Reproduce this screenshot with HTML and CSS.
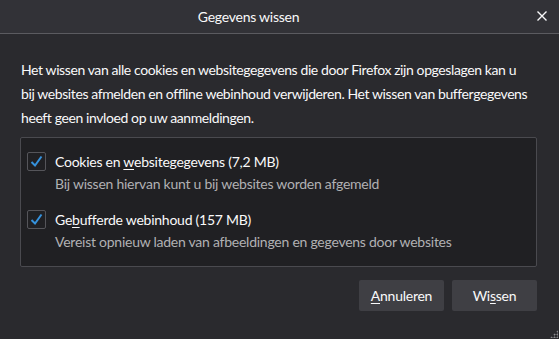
FILE: index.html
```html
<!DOCTYPE html>
<html lang="nl">
<head>
<meta charset="UTF-8" />
<meta name="viewport" content="width=device-width, initial-scale=1" />
<title>Gegevens wissen</title>
<link rel="stylesheet" href="styles.css">
</head>
<body>

<div class="dialog">
  <header class="titlebar">
    <span class="title">Gegevens wissen</span>
    <button class="close" title="Sluiten">
      <svg width="10" height="10" viewBox="0 0 10 10"><path d="M0.5 0.5 L9.5 9.5 M9.5 0.5 L0.5 9.5" stroke="#f9f9fa" stroke-width="1.4" fill="none"/></svg>
    </button>
  </header>

  <main class="content">
    <p class="intro">Het wissen van alle cookies en websitegegevens die door Firefox zijn opgeslagen kan u<br>
      bij websites afmelden en offline webinhoud verwijderen. Het wissen van buffergegevens<br>
      heeft geen invloed op uw aanmeldingen.</p>

    <div class="options">
      <label class="option">
        <span class="check">
          <svg width="17" height="17" viewBox="0 0 17 17"><path d="M3.5 9 L7 12.5 L13.5 3.5" stroke="#3592dd" stroke-width="2" fill="none"/></svg>
        </span>
        <span class="text">
          <span class="name">Cookies en <u>w</u>ebsitegegevens (7,2 MB)</span>
          <span class="desc">Bij wissen hiervan kunt u bij websites worden afgemeld</span>
        </span>
      </label>
      <label class="option">
        <span class="check">
          <svg width="17" height="17" viewBox="0 0 17 17"><path d="M3.5 9 L7 12.5 L13.5 3.5" stroke="#3592dd" stroke-width="2" fill="none"/></svg>
        </span>
        <span class="text">
          <span class="name">Ge<u>b</u>ufferde webinhoud (157 MB)</span>
          <span class="desc">Vereist opnieuw laden van afbeeldingen en gegevens door websites</span>
        </span>
      </label>
    </div>

    <div class="actions">
      <button class="btn"><u>A</u>nnuleren</button>
      <button class="btn">Wi<u>s</u>sen</button>
    </div>
  </main>

  <div class="grip"></div>
</div>

</body>
</html>
```

FILE: styles.css
```css
html, body {
  margin: 0; padding: 0;
  background: #2a2a2e;
}
body {
  font-family: Lato, "Noto Sans", sans-serif;
  font-size: 14px;
  letter-spacing: -0.25px;
  color: #f9f9fa;
}
.dialog {
  position: relative;
  width: 559px;
  height: 339px;
  overflow: hidden;
}
.titlebar {
  height: 33px;
  background: #323237;
  border-bottom: 1px solid #5b5b60;
  display: flex;
  align-items: center;
  padding: 0 12px 0 0;
}
.title {
  flex: 1;
  text-align: center;
  padding-right: 40px;
}
.close {
  background: none;
  border: none;
  padding: 0;
  width: 10px; height: 10px;
  margin-top: -2px;
  display: flex;
}
.content {
  padding: 24px 22px 0 20px;
}
.intro {
  margin: 0 0 7px 1px;
  line-height: 24px;
  letter-spacing: -0.4px;
  white-space: nowrap;
}
.options {
  background: #202023;
  border: 1px solid #4a4a4f;
  border-radius: 2px;
  padding: 14px 6px 12px;
}
.option {
  display: flex;
  align-items: flex-start;
  gap: 9px;
}
.option + .option {
  margin-top: 14px;
}
.check {
  width: 17px; height: 17px;
  border: 1px solid #55555a;
  border-radius: 2px;
  background: #202023;
  display: flex;
}
.text {
  display: flex;
  flex-direction: column;
}
.name {
  line-height: 20px;
}
.desc {
  line-height: 24px;
  color: #b1b1b3;
}
u {
  text-underline-offset: 2px;
}
.actions {
  display: flex;
  justify-content: flex-end;
  gap: 8px;
  margin-top: 13px;
}
.btn {
  width: 85px; height: 31px;
  background: #3f3f44;
  border: none;
  border-radius: 2px;
  color: #f9f9fa;
  font-family: inherit;
  font-size: 14px;
  letter-spacing: inherit;
  padding: 0;
}
.grip {
  position: absolute;
  right: 1px; bottom: 1px;
  width: 8px; height: 8px;
  background:
    radial-gradient(circle, #8a8a8e 0.9px, transparent 1.1px) 0 0 / 3px 3px;
  clip-path: polygon(100% 0, 100% 100%, 0 100%);
}
```
